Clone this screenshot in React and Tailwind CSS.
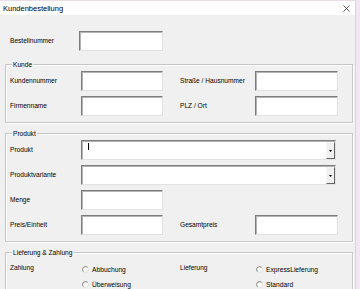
import React from "react";

const font = "font-['Liberation_Sans',Arial,sans-serif]";

function TextBox({ w }) {
  return (
    <div
      className={`${w} h-[20px] shrink-0 bg-white border border-t-[#7c7c7c] border-l-[#7c7c7c] border-r-[#e2e2e2] border-b-[#e2e2e2] shadow-[inset_1px_1px_0_#b4b4b4]`}
    />
  );
}

function Combo({ cursor }) {
  return (
    <div className="w-[255px] h-[20px] shrink-0 bg-white border border-t-[#7c7c7c] border-l-[#7c7c7c] border-r-[#e2e2e2] border-b-[#e2e2e2] shadow-[inset_1px_1px_0_#b4b4b4] flex items-stretch justify-between">
      <div className="flex items-start pt-[2px] pl-[6px]">
        {cursor && <div className="w-px h-[7px] bg-black" />}
      </div>
      <div className="w-[9px] mt-[1px] bg-[#f0f0f0] border border-t-[#f4f4f4] border-l-[#f4f4f4] border-r-[#646464] border-b-[#646464] flex items-center justify-center">
        <svg width="3" height="2" viewBox="0 0 3 2">
          <path d="M0 0H3L1.5 2Z" fill="#000" />
        </svg>
      </div>
    </div>
  );
}

function Label({ w, children }) {
  return <div className={`${w} shrink-0 text-[6.6px] leading-[8px] text-black whitespace-nowrap`}>{children}</div>;
}

function Frame({ title, className = "", children }) {
  return (
    <div
      className={`relative shrink-0 w-[348px] border border-[#c6c6c6] shadow-[inset_1px_1px_0_#ffffff,1px_1px_0_#ffffff] ${className}`}
    >
      <div className="absolute left-[6px] top-[-5px] px-[1px] bg-[#f0f0f0] text-[6.6px] leading-[9px] text-black whitespace-nowrap">
        {title}
      </div>
      {children}
    </div>
  );
}

function Radio({ children }) {
  return (
    <div className="h-[15px] shrink-0 flex items-center gap-[3px]">
      <svg width="7" height="7" viewBox="0 0 7 7">
        <circle cx="3.5" cy="3.5" r="3" fill="#fff" stroke="#dedede" strokeWidth="0.9" />
        <path d="M1.38 5.62 A3 3 0 0 1 5.62 1.38" fill="none" stroke="#7a7a7a" strokeWidth="0.9" />
      </svg>
      <span className="text-[6.7px] leading-[8px] text-black whitespace-nowrap">{children}</span>
    </div>
  );
}

export default function App() {
  return (
    <div className={`w-[360px] h-[289px] overflow-hidden bg-[#f2e7f0] ${font}`}>
      <div className="w-[356px] h-[289px] overflow-hidden border-r border-[#d6d6d6] border-t border-t-[#eadde8] bg-[#f0f0f0] flex flex-col">
        <div className="h-[14px] shrink-0 bg-white flex items-center justify-between pl-[3px] pr-[5px]">
          <span className="text-[7.5px] leading-[9px] text-black">Kundenbestellung</span>
          <svg width="7" height="7" viewBox="0 0 7 7">
            <path d="M0.5 0.5L6.5 6.5M6.5 0.5L0.5 6.5" stroke="#333" strokeWidth="0.8" />
          </svg>
        </div>

        <div className="flex flex-col shrink-0 pl-[5px]">
          <div className="mt-[16px] flex items-center pl-[5px]">
            <Label w="w-[69px]">Bestellnummer</Label>
            <TextBox w="w-[84px]" />
          </div>

          <Frame title="Kunde" className="mt-[13px] pt-[6px] pb-[6px] pl-[4px]">
            <div className="flex flex-col gap-[5px]">
              <div className="flex items-center">
                <Label w="w-[71px]">Kundennummer</Label>
                <TextBox w="w-[82px]" />
                <div className="w-[17px] shrink-0" />
                <Label w="w-[75px]">Straße / Hausnummer</Label>
                <TextBox w="w-[83px]" />
              </div>
              <div className="flex items-center">
                <Label w="w-[71px]">Firmenname</Label>
                <TextBox w="w-[82px]" />
                <div className="w-[17px] shrink-0" />
                <Label w="w-[75px]">PLZ / Ort</Label>
                <TextBox w="w-[83px]" />
              </div>
            </div>
          </Frame>

          <Frame title="Produkt" className="mt-[10px] pt-[6px] pb-[6px] pl-[4px]">
            <div className="flex flex-col gap-[5px]">
              <div className="flex items-center">
                <Label w="w-[71px]">Produkt</Label>
                <Combo cursor />
              </div>
              <div className="flex items-center">
                <Label w="w-[71px]">Produktvariante</Label>
                <Combo />
              </div>
              <div className="flex items-center">
                <Label w="w-[71px]">Menge</Label>
                <TextBox w="w-[82px]" />
              </div>
              <div className="flex items-center">
                <Label w="w-[71px]">Preis/Einheit</Label>
                <TextBox w="w-[82px]" />
                <div className="w-[17px] shrink-0" />
                <Label w="w-[75px]">Gesamtpreis</Label>
                <TextBox w="w-[83px]" />
              </div>
            </div>
          </Frame>

          <Frame title="Lieferung & Zahlung" className="mt-[10px] pt-[9px] pb-[10px] pl-[4px]">
            <div className="flex items-start">
              <div className="w-[71px] h-[11px] shrink-0 flex items-center">
                <Label w="w-[71px]">Zahlung</Label>
              </div>
              <div className="w-[99px] shrink-0 pl-[1px] flex flex-col">
                <Radio>Abbuchung</Radio>
                <Radio>Überweisung</Radio>
              </div>
              <div className="w-[76px] h-[11px] shrink-0 flex items-center">
                <Label w="w-[76px]">Lieferung</Label>
              </div>
              <div className="flex flex-col">
                <Radio>ExpressLieferung</Radio>
                <Radio>Standard</Radio>
              </div>
            </div>
          </Frame>
        </div>
      </div>
    </div>
  );
}
